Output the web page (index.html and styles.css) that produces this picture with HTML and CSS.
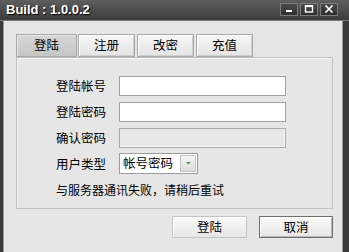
FILE: index.html
```html
<!DOCTYPE html>
<html lang="zh-CN">
<head>
  <meta charset="UTF-8">
  <title>Build : 1.0.0.2</title>
  <link rel="stylesheet" href="styles.css">
</head>
<body>
  <div class="window">
    <!-- title bar -->
    <div class="titlebar">
      <span class="title">Build : 1.0.0.2</span>
      <div class="controls">
        <span class="ctl"><svg width="10" height="8" viewBox="0 0 10 8"><rect x="2" y="5" width="6" height="2" fill="#fff"/></svg></span>
        <span class="ctl"><svg width="10" height="8" viewBox="0 0 10 8"><rect x="1.5" y="0.5" width="7" height="6.5" fill="none" stroke="#fff" stroke-width="1.4"/><rect x="1.5" y="0.5" width="7" height="1.6" fill="#fff"/></svg></span>
        <span class="ctl"><svg width="10" height="8" viewBox="0 0 10 8"><path d="M1.5 0.5 L8.5 7.5 M8.5 0.5 L1.5 7.5" stroke="#fff" stroke-width="1.6"/></svg></span>
      </div>
    </div>

    <div class="frame">
      <!-- tabs -->
      <div class="tabs">
        <span class="tab active">登陆</span>
        <span class="tab">注册</span>
        <span class="tab">改密</span>
        <span class="tab">充值</span>
      </div>

      <div class="panel">
        <div class="row">
          <label for="account">登陆帐号</label>
          <input type="text" id="account">
        </div>
        <div class="row">
          <label for="password">登陆密码</label>
          <input type="password" id="password">
        </div>
        <div class="row">
          <label for="confirm">确认密码</label>
          <input type="password" id="confirm" class="disabled" disabled>
        </div>
        <div class="row">
          <label>用户类型</label>
          <div class="combo">
            <span class="combo-text">帐号密码</span>
            <span class="combo-btn"><svg width="7" height="5" viewBox="0 0 7 5"><path d="M1 1 H6 L3.5 3.5 Z" fill="#777"/><rect x="3" y="1" width="1" height="1" fill="#4c4"/></svg></span>
          </div>
        </div>
        <p class="message">与服务器通讯失败，请稍后重试</p>
      </div>

      <div class="actions">
        <button type="button" class="btn">登陆</button>
        <button type="button" class="btn default">取消</button>
      </div>
    </div>
  </div>
</body>
</html>
```

FILE: styles.css
```css
body {
  margin: 0;
  padding: 0;
  background-color: #e6e6e6;
  font-family: "Noto Sans CJK SC", "Liberation Sans", sans-serif;
  font-size: 12px;
  color: #000;
}

.window {
  width: 349px;
  height: 252px;
  display: flex;
  flex-direction: column;
  overflow: hidden;
}

.titlebar {
  height: 21px;
  display: flex;
  align-items: center;
  justify-content: space-between;
  background: linear-gradient(#5e5e5e, #3c3c3c);
  border-bottom: 1px solid #7a7a7a;
  box-sizing: border-box;
  padding: 0 11px 0 6px;
}

.title {
  font-family: "Liberation Sans", Arial, sans-serif;
  font-weight: bold;
  font-size: 13px;
  color: #fff;
  text-shadow: 1px 1px 1px #000;
  margin-top: -2px;
}

.controls {
  display: flex;
  gap: 2px;
  margin-top: -2px;
}

.ctl {
  width: 18px;
  height: 13px;
  box-sizing: border-box;
  border: 1px solid #7c7c7c;
  background: linear-gradient(#4a4a4a, #2e2e2e);
  display: flex;
  align-items: center;
  justify-content: center;
}

.frame {
  flex: 1;
  background-color: #e6e6e6;
  border-left: 3px solid #3a3a3a;
  border-right: 6px solid #3a3a3a;
  padding: 13px 10px 0 13px;
  box-shadow: inset -1px 0 0 #9a9a9a, inset 1px 0 0 #9a9a9a;
}

.tabs {
  display: flex;
  gap: 2px;
  height: 23px;
}

.tab {
  width: 57px;
  height: 23px;
  box-sizing: border-box;
  border: 1px solid #a8a8a8;
  box-shadow: inset 1px 1px 0 #fff, inset -1px -1px 0 #d0d0d0;
  background: linear-gradient(#f6f6f6, #e4e4e4);
  display: flex;
  align-items: center;
  justify-content: center;
  line-height: 1;
  font-size: 12.5px;
}

.tab.active {
  width: 61px;
  margin-right: -1px;
  background: linear-gradient(#d6d6d6, #c6c6c6);
  box-shadow: inset 1px 1px 0 #e8e8e8;
}

.panel {
  width: 317px;
  height: 152px;
  box-sizing: border-box;
  border: 1px solid #c2c2c2;
  box-shadow: inset 1px 1px 0 #f4f4f4;
  padding: 18px 0 0 39px;
}

.row {
  display: flex;
  align-items: center;
  height: 20px;
  margin-bottom: 6px;
}

.row label {
  width: 63px;
  line-height: 1;
  font-size: 12.5px;
}

.row input {
  width: 167px;
  height: 20px;
  box-sizing: border-box;
  border: 1px solid #a0a0a0;
  background-color: #fff;
  margin: 0;
  padding: 0 3px;
  outline: none;
}

.row input.disabled {
  background-color: #e8e8e8;
  border-color: #a8a8a8;
  box-shadow: inset -1px -1px 0 #fafafa;
}

.combo {
  width: 79px;
  height: 21px;
  box-sizing: border-box;
  border: 1px solid #9c9c9c;
  background-color: #fff;
  display: flex;
  align-items: center;
  justify-content: space-between;
  padding: 0 1px 0 3px;
  margin-top: -2px;
}

.combo-text {
  font-size: 12.5px;
  line-height: 1;
}

.combo-btn {
  width: 16px;
  height: 17px;
  box-sizing: border-box;
  border: 1px solid #c4c4c4;
  background: linear-gradient(#f4f4f4, #dcdcdc);
  display: flex;
  align-items: center;
  justify-content: center;
}

.message {
  margin: 10px 0 0 0;
  line-height: 1;
  font-size: 12px;
}

.actions {
  display: flex;
  justify-content: flex-end;
  gap: 12px;
  margin-top: 7px;
  width: 317px;
}

.btn {
  width: 75px;
  height: 22px;
  margin: 0;
  padding: 0;
  border: 1px solid #c4c4c4;
  background: linear-gradient(#fafafa, #e6e6e6);
  box-shadow: inset 1px 1px 0 #fff;
  font-family: "Noto Sans CJK SC", sans-serif;
  font-size: 12.5px;
  line-height: 1;
  color: #000;
}

.btn.default {
  width: 74px;
  border: 1px solid #6e6e6e;
  box-shadow: inset 1px 1px 0 #fff, inset -1px -1px 0 #b8b8b8;
}
```
